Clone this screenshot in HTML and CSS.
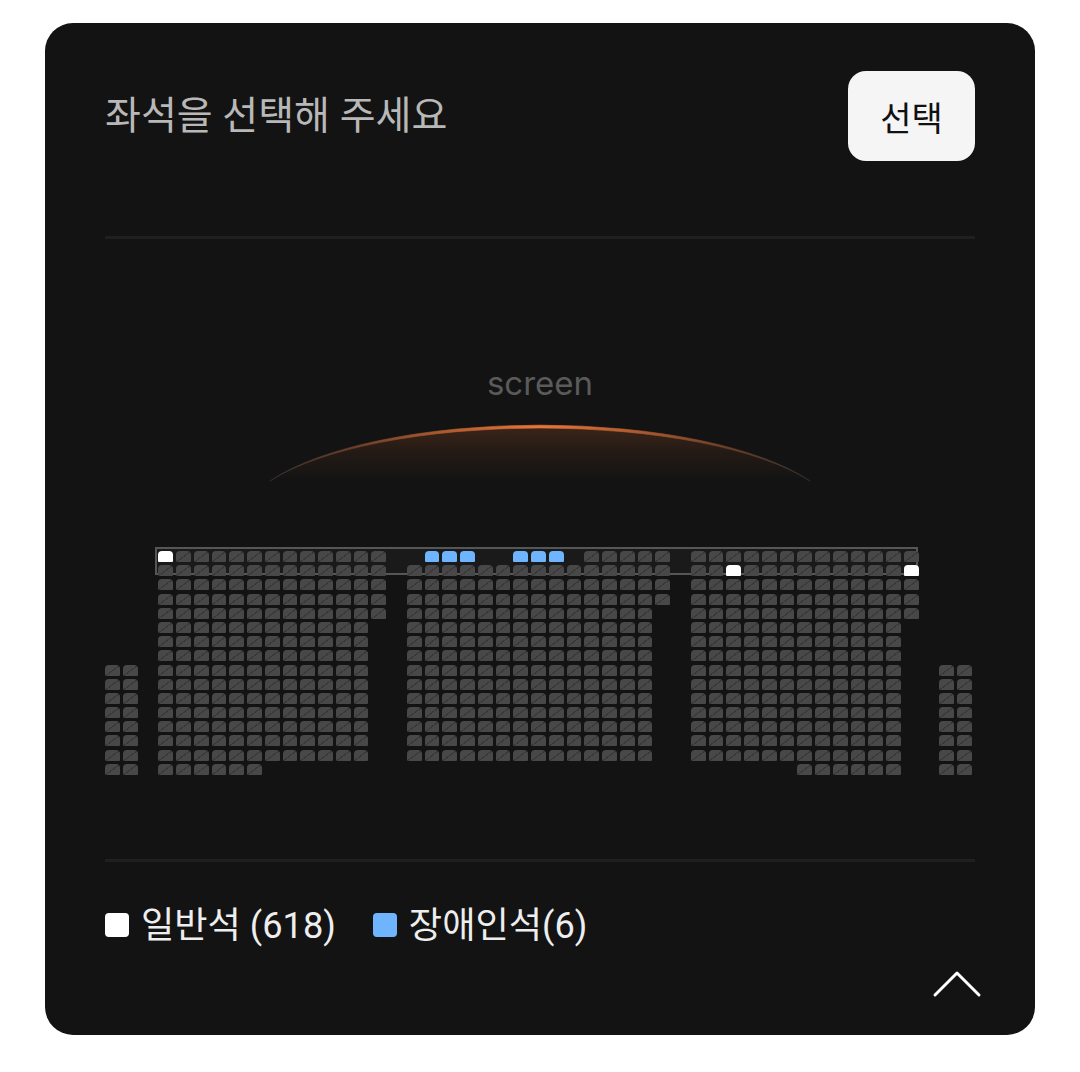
FILE: index.html
```html
<!DOCTYPE html>
<html lang="ko">
<head>
<meta charset="utf-8">
<title>좌석 선택</title>
<link rel="stylesheet" href="styles.css">
</head>
<body>
<main class="card">
  <header class="head">
    <h1 class="title">좌석을 선택해 주세요</h1>
    <button class="select-btn" type="button">선택</button>
  </header>
  <hr class="rule">
  <section class="hall">
    <p class="screen-label">screen</p>
    <svg class="screen-arc" width="544" height="62" viewBox="0 0 544 62" aria-hidden="true">
      <defs>
        <linearGradient id="arcStroke" x1="0" y1="0" x2="1" y2="0">
          <stop offset="0" stop-color="#333"/>
          <stop offset="0.15" stop-color="#6b3f28"/>
          <stop offset="0.35" stop-color="#b85f30"/>
          <stop offset="0.5" stop-color="#e8763a"/>
          <stop offset="0.65" stop-color="#b85f30"/>
          <stop offset="0.85" stop-color="#6b3f28"/>
          <stop offset="1" stop-color="#333"/>
        </linearGradient>
        <linearGradient id="arcFill" x1="0" y1="0" x2="0" y2="1">
          <stop offset="0" stop-color="#e06c30" stop-opacity="0.2"/>
          <stop offset="0.5" stop-color="#e06c30" stop-opacity="0.08"/>
          <stop offset="1" stop-color="#e06c30" stop-opacity="0"/>
        </linearGradient>
      </defs>
      <path d="M2 58A300 99 0 0 1 542 58Z" fill="url(#arcFill)"/>
      <path d="M2 58A300 99 0 0 1 542 58A300 94 0 0 0 2 58Z" fill="url(#arcStroke)" stroke="url(#arcStroke)" stroke-width="0.6"/>
    </svg>
    <div class="map">
      <div class="row-box"></div>
      <div class="seats" id="seats"></div>
    </div>
  </section>
  <hr class="rule">
  <ul class="legend">
    <li class="legend-item"><span class="swatch swatch-normal"></span>일반석 (618)</li>
    <li class="legend-item"><span class="swatch swatch-access"></span>장애인석(6)</li>
  </ul>
  <div class="foot">
    <svg class="chevron" width="50" height="28" viewBox="0 0 50 28" aria-hidden="true">
      <path d="M3 25L25 3L47 25" fill="none" stroke="#fff" stroke-width="3" stroke-linecap="round" stroke-linejoin="round"/>
    </svg>
  </div>
</main>
<script src="seats.js"></script>
</body>
</html>
```

FILE: styles.css
```css
* { box-sizing: border-box; }
html, body { margin: 0; background: #fff; }
body {
  padding: 23px 45px 0;
  font-family: Roboto, "Noto Sans CJK KR", "Noto Sans", sans-serif;
}
.card {
  width: 990px;
  height: 1012px;
  background: #131313;
  border-radius: 28px;
  padding: 48px 60px 0;
  display: flex;
  flex-direction: column;
}
.head {
  display: flex;
  justify-content: space-between;
  align-items: flex-start;
  height: 165px;
}
.title {
  margin: 17px 0 0;
  font-size: 39px;
  line-height: 56px;
  font-weight: 400;
  color: #b8b8b8;
}
.select-btn {
  width: 127px;
  height: 90px;
  border: 0;
  border-radius: 18px;
  background: #f5f5f5;
  color: #111;
  font: 400 34px "Noto Sans CJK KR", sans-serif;
}
.rule {
  width: 100%;
  height: 3px;
  margin: 0;
  border: 0;
  background: #1f1f1f;
  flex: none;
}
.hall {
  height: 620px;
  display: flex;
  flex-direction: column;
  align-items: center;
}
.screen-label {
  margin: 122px 0 0;
  font-family: Inter, "Noto Sans", sans-serif;
  font-size: 33px;
  line-height: 44px;
  color: #5a5a5a;
}
.screen-arc {
  display: block;
  margin-top: 18px;
  flex: none;
}
.map {
  position: relative;
  align-self: flex-start;
  margin-top: 66px;
}
.row-box {
  position: absolute;
  left: 50px;
  top: -4px;
  width: 763px;
  height: 28px;
  border: 2px solid #565656;
  background: #1a1a1a;
}
.seats {
  position: relative;
  display: grid;
  grid-template-columns: repeat(49, 14.75px);
  grid-auto-rows: 11px;
  column-gap: 3px;
  row-gap: 3.2px;
}
.seat {
  border-radius: 4px 4px 1px 1px;
  background:
    linear-gradient(to bottom right, transparent 47%, #383838 47%, #383838 54%, transparent 54%),
    #484848;
}
.seat-normal { background: #fff; }
.seat-access { background: #6fb4ff; }
.legend {
  list-style: none;
  margin: 33px 0 0;
  padding: 0;
  display: flex;
  gap: 37px;
}
.legend-item {
  display: flex;
  align-items: center;
  gap: 12px;
  font-size: 36.2px;
  line-height: 62px;
  color: #eee;
}
.swatch {
  width: 24px;
  height: 24px;
  margin-bottom: 2px;
  border-radius: 4px;
  flex: none;
}
.swatch-normal { background: #fff; }
.swatch-access { background: #6fb4ff; }
.foot {
  display: flex;
  justify-content: flex-end;
  margin: 13px -7px 0 0;
}
.chevron { display: block; }
```

FILE: seats.js
```js
// Each entry: [row, first column, last column]. Columns and rows share one grid.
var blocks = [
  [0, 3, 15], [0, 27, 31], [0, 33, 45],
  [1, 3, 15], [1, 17, 31], [1, 33, 45],
  [2, 3, 15], [2, 17, 31], [2, 33, 45],
  [3, 3, 15], [3, 17, 31], [3, 33, 45],
  [4, 3, 15], [4, 17, 30], [4, 33, 45]
];
for (var r = 5; r <= 14; r++) {
  blocks.push([r, 3, 14], [r, 17, 30], [r, 33, 44]);
}
for (var s = 8; s <= 15; s++) {
  blocks.push([s, 0, 1], [s, 47, 48]);
}
blocks.push([15, 3, 8], [15, 39, 44]);

var special = {
  "0:3": "seat-normal", "1:35": "seat-normal", "1:45": "seat-normal",
  "0:18": "seat-access", "0:19": "seat-access", "0:20": "seat-access",
  "0:23": "seat-access", "0:24": "seat-access", "0:25": "seat-access"
};
var seatMap = document.getElementById("seats");

function addSeat(row, col) {
  var seat = document.createElement("div");
  var kind = special[row + ":" + col];
  seat.className = kind ? "seat " + kind : "seat";
  seat.style.gridRow = String(row + 1);
  seat.style.gridColumn = String(col + 1);
  seatMap.appendChild(seat);
}

blocks.forEach(function (b) {
  for (var c = b[1]; c <= b[2]; c++) addSeat(b[0], c);
});
Object.keys(special).forEach(function (key) {
  var p = key.split(":");
  if (special[key] === "seat-access") addSeat(+p[0], +p[1]);
});
```
